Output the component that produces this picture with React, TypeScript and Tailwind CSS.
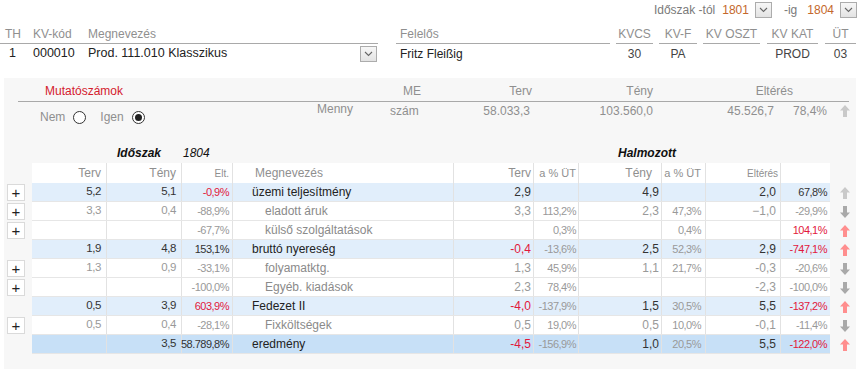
import React from 'react';

type Kind = 'main' | 'sub' | 'total';
type ArrowKind = 'up-light' | 'down' | 'up-red';

interface Row {
  kind: Kind;
  plus: boolean;
  arrow: ArrowKind;
  name: string;
  v: string[]; // terv, teny, elt, hTerv, hTervPct, hTeny, hTenyPct, hElt, hEltPct
  red: number[];
}

const rows: Row[] = [
  { kind: 'main', plus: true, arrow: 'up-light', name: 'üzemi teljesítmény', v: ['5,2', '5,1', '-0,9%', '2,9', '', '4,9', '', '2,0', '67,8%'], red: [2] },
  { kind: 'sub', plus: true, arrow: 'down', name: 'eladott áruk', v: ['3,3', '0,4', '-88,9%', '3,3', '113,2%', '2,3', '47,3%', '−1,0', '-29,9%'], red: [] },
  { kind: 'sub', plus: true, arrow: 'up-red', name: 'külső szolgáltatások', v: ['', '', '-67,7%', '', '0,3%', '', '0,4%', '', '104,1%'], red: [8] },
  { kind: 'main', plus: false, arrow: 'up-red', name: 'bruttó nyereség', v: ['1,9', '4,8', '153,1%', '-0,4', '-13,6%', '2,5', '52,3%', '2,9', '-747,1%'], red: [3, 8] },
  { kind: 'sub', plus: true, arrow: 'down', name: 'folyamatktg.', v: ['1,3', '0,9', '-33,1%', '1,3', '45,9%', '1,1', '21,7%', '-0,3', '-20,6%'], red: [] },
  { kind: 'sub', plus: true, arrow: 'down', name: 'Egyéb. kiadások', v: ['', '', '-100,0%', '2,3', '78,4%', '', '', '-2,3', '-100,0%'], red: [] },
  { kind: 'main', plus: false, arrow: 'up-red', name: 'Fedezet II', v: ['0,5', '3,9', '603,9%', '-4,0', '-137,9%', '1,5', '30,5%', '5,5', '-137,2%'], red: [2, 3, 8] },
  { kind: 'sub', plus: true, arrow: 'down', name: 'Fixköltségek', v: ['0,5', '0,4', '-28,1%', '0,5', '19,0%', '0,5', '10,0%', '-0,1', '-11,4%'], red: [] },
  { kind: 'total', plus: false, arrow: 'up-red', name: 'eredmény', v: ['', '3,5', '58.789,8%', '-4,5', '-156,9%', '1,0', '20,5%', '5,5', '-122,0%'], red: [3, 8] },
];

function Arrow({ kind }: { kind: ArrowKind }) {
  const color = kind === 'up-light' ? '#c9c9c9' : kind === 'down' ? '#a9a9a9' : '#ff8e8e';
  const d = kind === 'down' ? 'M5 12 L10 6.5 L7 6.5 L7 0 L3 0 L3 6.5 L0 6.5 Z' : 'M5 0 L10 5.5 L7 5.5 L7 12 L3 12 L3 5.5 L0 5.5 Z';
  return (
    <svg width="10" height="12" viewBox="0 0 10 12">
      <path d={d} fill={color} />
    </svg>
  );
}

function DropBtn() {
  return (
    <span className="w-[17px] h-[16px] border border-[#acacac] bg-gradient-to-b from-[#f7f7f7] to-[#e3e3e3] flex items-center justify-center">
      <svg width="9" height="6" viewBox="0 0 9 6">
        <polyline points="1,1 4.5,4.5 8,1" fill="none" stroke="#666" strokeWidth="1.1" />
      </svg>
    </span>
  );
}

function Radio({ checked }: { checked?: boolean }) {
  return (
    <span className="w-[13px] h-[13px] rounded-full border border-[#333] bg-white flex items-center justify-center">
      {checked && <span className="w-[7px] h-[7px] rounded-full bg-[#222]" />}
    </span>
  );
}

const widths = ['w-[75px]', 'w-[75px]', 'w-[51px]', 'w-[221px]', 'w-[80px]', 'w-[45px]', 'w-[83px]', 'w-[44px]', 'w-[75px]', 'w-[49px]'];

function TableRow({ r }: { r: Row }) {
  const bg = r.kind === 'main' ? 'bg-[#e1eefb]' : r.kind === 'total' ? 'bg-[#c7e0f7]' : 'bg-white';
  const strong = r.kind !== 'sub';
  const color = (i: number, pct: boolean) => {
    if (r.red.includes(i)) return 'text-[#e2183c]';
    if (pct && (i === 4 || i === 6)) return 'text-[#999]';
    if (strong) return 'text-[#333]';
    return 'text-[#999]';
  };
  const cell = (idx: number, vi: number, extra: string) => (
    <div className={`${widths[idx]} h-full border-r border-[#e2e2e2] flex items-center justify-end whitespace-nowrap ${extra} ${color(vi, vi === 2 || vi % 2 === 0)}`}>
      {r.v[vi]}
    </div>
  );
  return (
    <div className="flex h-[19px]">
      <div className="w-[28px] h-full flex items-center">
        {r.plus && (
          <span className="ml-[3px] w-[18px] h-[17px] bg-white border border-[#dadada] flex items-center justify-center text-[15px] leading-none text-[#222]">+</span>
        )}
      </div>
      <div className={`w-[798px] flex h-full border-b border-[#e6e6e6] ${bg}`}>
        {cell(0, 0, 'pr-[5px] text-[11.5px] tracking-[-0.4px]')}
        {cell(1, 1, 'pr-[5px] text-[11.5px] tracking-[-0.4px]')}
        {cell(2, 2, 'pr-[3px] text-[11px] tracking-[-0.5px]')}
        <div className={`${widths[3]} h-full border-r border-[#e2e2e2] flex items-center text-[12px] ${r.kind === 'sub' ? 'pl-[32px] text-[#8a8a8a]' : 'pl-[19px] text-[#222]'}`}>
          {r.name}
        </div>
        {cell(4, 3, 'pr-[2px] text-[12px]')}
        {cell(5, 4, 'pr-[2px] text-[11px] tracking-[-0.5px]')}
        {cell(6, 5, 'pr-[2px] text-[12px]')}
        {cell(7, 6, 'pr-[4px] text-[11px] tracking-[-0.5px]')}
        {cell(8, 7, 'pr-[4px] text-[12px]')}
        <div className={`${widths[9]} h-full flex items-center justify-end pr-[3px] text-[11px] tracking-[-0.5px] ${color(8, true)}`}>
          {r.v[8]}
        </div>
      </div>
      <div className="w-[26px] h-full flex items-center pl-[10px]">
        <Arrow kind={r.arrow} />
      </div>
    </div>
  );
}

export default function App() {
  return (
    <div className="w-[861px] h-[369px] bg-white overflow-hidden flex flex-col font-['Liberation_Sans',Arial,sans-serif] text-[12px]">
      {/* Időszak választó */}
      <div className="h-[20px] flex items-center justify-end pr-[4px] text-[12px]">
        <span className="text-[#7a7a7a]">Időszak -tól</span>
        <span className="ml-[7px] text-[#c4672c]">1801</span>
        <span className="ml-[6px]"><DropBtn /></span>
        <span className="ml-[12px] text-[#7a7a7a]">-ig</span>
        <span className="ml-[10px] text-[#c4672c]">1804</span>
        <span className="ml-[6px]"><DropBtn /></span>
      </div>

      {/* Fejléc */}
      <div className="mt-[6px] flex text-[#8f8f8f] leading-[14px]">
        <div className="w-[378px] h-[18px] pt-[1px] border-b border-[#a9a9a9] flex">
          <span className="w-[28px] pl-[5px]">TH</span>
          <span className="w-[55px] pl-[5px]">KV-kód</span>
          <span className="pl-[5px]">Megnevezés</span>
        </div>
        <div className="w-[18px]" />
        <div className="w-[214px] h-[18px] pt-[1px] border-b border-[#a9a9a9] pl-[4px]">Felelős</div>
        <div className="w-[6px]" />
        <div className="w-[37px] h-[18px] pt-[1px] border-b border-[#a9a9a9] text-center">KVCS</div>
        <div className="w-[6px]" />
        <div className="w-[38px] h-[18px] pt-[1px] border-b border-[#a9a9a9] text-center">KV-F</div>
        <div className="w-[6px]" />
        <div className="w-[57px] h-[18px] pt-[1px] border-b border-[#a9a9a9] text-center">KV OSZT</div>
        <div className="w-[7px]" />
        <div className="w-[51px] h-[18px] pt-[1px] border-b border-[#a9a9a9] text-center">KV KAT</div>
        <div className="w-[7px]" />
        <div className="w-[31px] h-[18px] pt-[1px] border-b border-[#a9a9a9] text-center">ÜT</div>
      </div>

      {/* Adatsor */}
      <div className="flex h-[19px] items-center text-[#222]">
        <div className="w-[378px] flex items-center text-[12.5px]">
          <span className="w-[28px] pl-[9px]">1</span>
          <span className="w-[55px] pl-[5px]">000010</span>
          <span className="flex-1 pl-[5px]">Prod. 111.010 Klasszikus</span>
          <span className="pr-[1px]"><DropBtn /></span>
        </div>
        <div className="w-[18px]" />
        <div className="w-[214px] pl-[4px]">Fritz Fleißig</div>
        <div className="w-[6px]" />
        <div className="w-[37px] text-center text-[#444]">30</div>
        <div className="w-[6px]" />
        <div className="w-[38px] text-center text-[#444]">PA</div>
        <div className="w-[6px]" />
        <div className="w-[57px]" />
        <div className="w-[7px]" />
        <div className="w-[51px] text-center text-[#444]">PROD</div>
        <div className="w-[7px]" />
        <div className="w-[31px] text-center text-[#444]">03</div>
      </div>

      {/* Panel */}
      <div className="mt-[15px] ml-[4px] w-[852px] flex-1 bg-[#f7f7f7]">
        {/* Mutatószámok */}
        <div className="ml-[14px] w-[831px]">
          <div className="flex pt-[6px] pb-[3px] border-b border-[#a9a9a9] leading-[14px] text-[#8f8f8f]">
            <div className="w-[380px] pl-[27px] text-[#d4202e]">Mutatószámok</div>
            <div className="w-[27px] pl-[5px]">ME</div>
            <div className="w-[107px] text-right">Terv</div>
            <div className="w-[121px] text-right">Tény</div>
            <div className="w-[140px] text-right">Eltérés</div>
            <div className="w-[56px]" />
          </div>
          <div className="flex items-start h-[30px] leading-[14px] text-[#8f8f8f]">
            <div className="w-[282px] mt-[8px] pl-[22px] flex items-center">
              <span>Nem</span>
              <span className="ml-[8px]"><Radio /></span>
              <span className="ml-[14px]">Igen</span>
              <span className="ml-[8px]"><Radio checked /></span>
            </div>
            <div className="w-[60px] pl-[17px]">Menny</div>
            <div className="w-[60px] mt-[2px] pl-[30px]">szám</div>
            <div className="w-[110px] mt-[2px] text-right">58.033,3</div>
            <div className="w-[123px] mt-[2px] text-right">103.560,0</div>
            <div className="w-[121px] mt-[2px] text-right">45.526,7</div>
            <div className="w-[53px] mt-[2px] text-right">78,4%</div>
            <div className="w-[22px] mt-[3px] pl-[13px]"><Arrow kind="up-light" /></div>
          </div>
        </div>

        {/* Címsor */}
        <div className="flex h-[31px] pt-[14px] leading-[14px] text-[#111] italic">
          <div className="w-[179px] pl-[113px] font-bold">Időszak</div>
          <div className="w-[435px]">1804</div>
          <div className="font-bold">Halmozott</div>
        </div>

        {/* Táblázat fejléc */}
        <div className="flex h-[20px]">
          <div className="w-[28px]" />
          <div className="w-[798px] flex bg-white text-[#8f8f8f] whitespace-nowrap">
            <div className={`${widths[0]} border-r border-[#e2e2e2] flex items-center justify-end pr-[5px]`}>Terv</div>
            <div className={`${widths[1]} border-r border-[#e2e2e2] flex items-center justify-end pr-[5px]`}>Tény</div>
            <div className={`${widths[2]} border-r border-[#e2e2e2] flex items-center justify-end pr-[3px] text-[10px]`}>Elt.</div>
            <div className={`${widths[3]} border-r border-[#e2e2e2] flex items-center pl-[22px]`}>Megnevezés</div>
            <div className={`${widths[4]} border-r border-[#e2e2e2] flex items-center justify-end pr-[2px]`}>Terv</div>
            <div className={`${widths[5]} border-r border-[#e2e2e2] flex items-center justify-end pr-[2px] text-[11px]`}>a % ÜT</div>
            <div className={`${widths[6]} border-r border-[#e2e2e2] flex items-center justify-end pr-[9px]`}>Tény</div>
            <div className={`${widths[7]} border-r border-[#e2e2e2] flex items-center justify-end pr-[4px] text-[11px]`}>a % ÜT</div>
            <div className={`${widths[8]} border-r border-[#e2e2e2] flex items-center pl-[41px] text-[10px]`}>Eltérés</div>
            <div className={`${widths[9]}`} />
          </div>
        </div>

        {rows.map((r, i) => (
          <TableRow key={i} r={r} />
        ))}
      </div>
    </div>
  );
}
